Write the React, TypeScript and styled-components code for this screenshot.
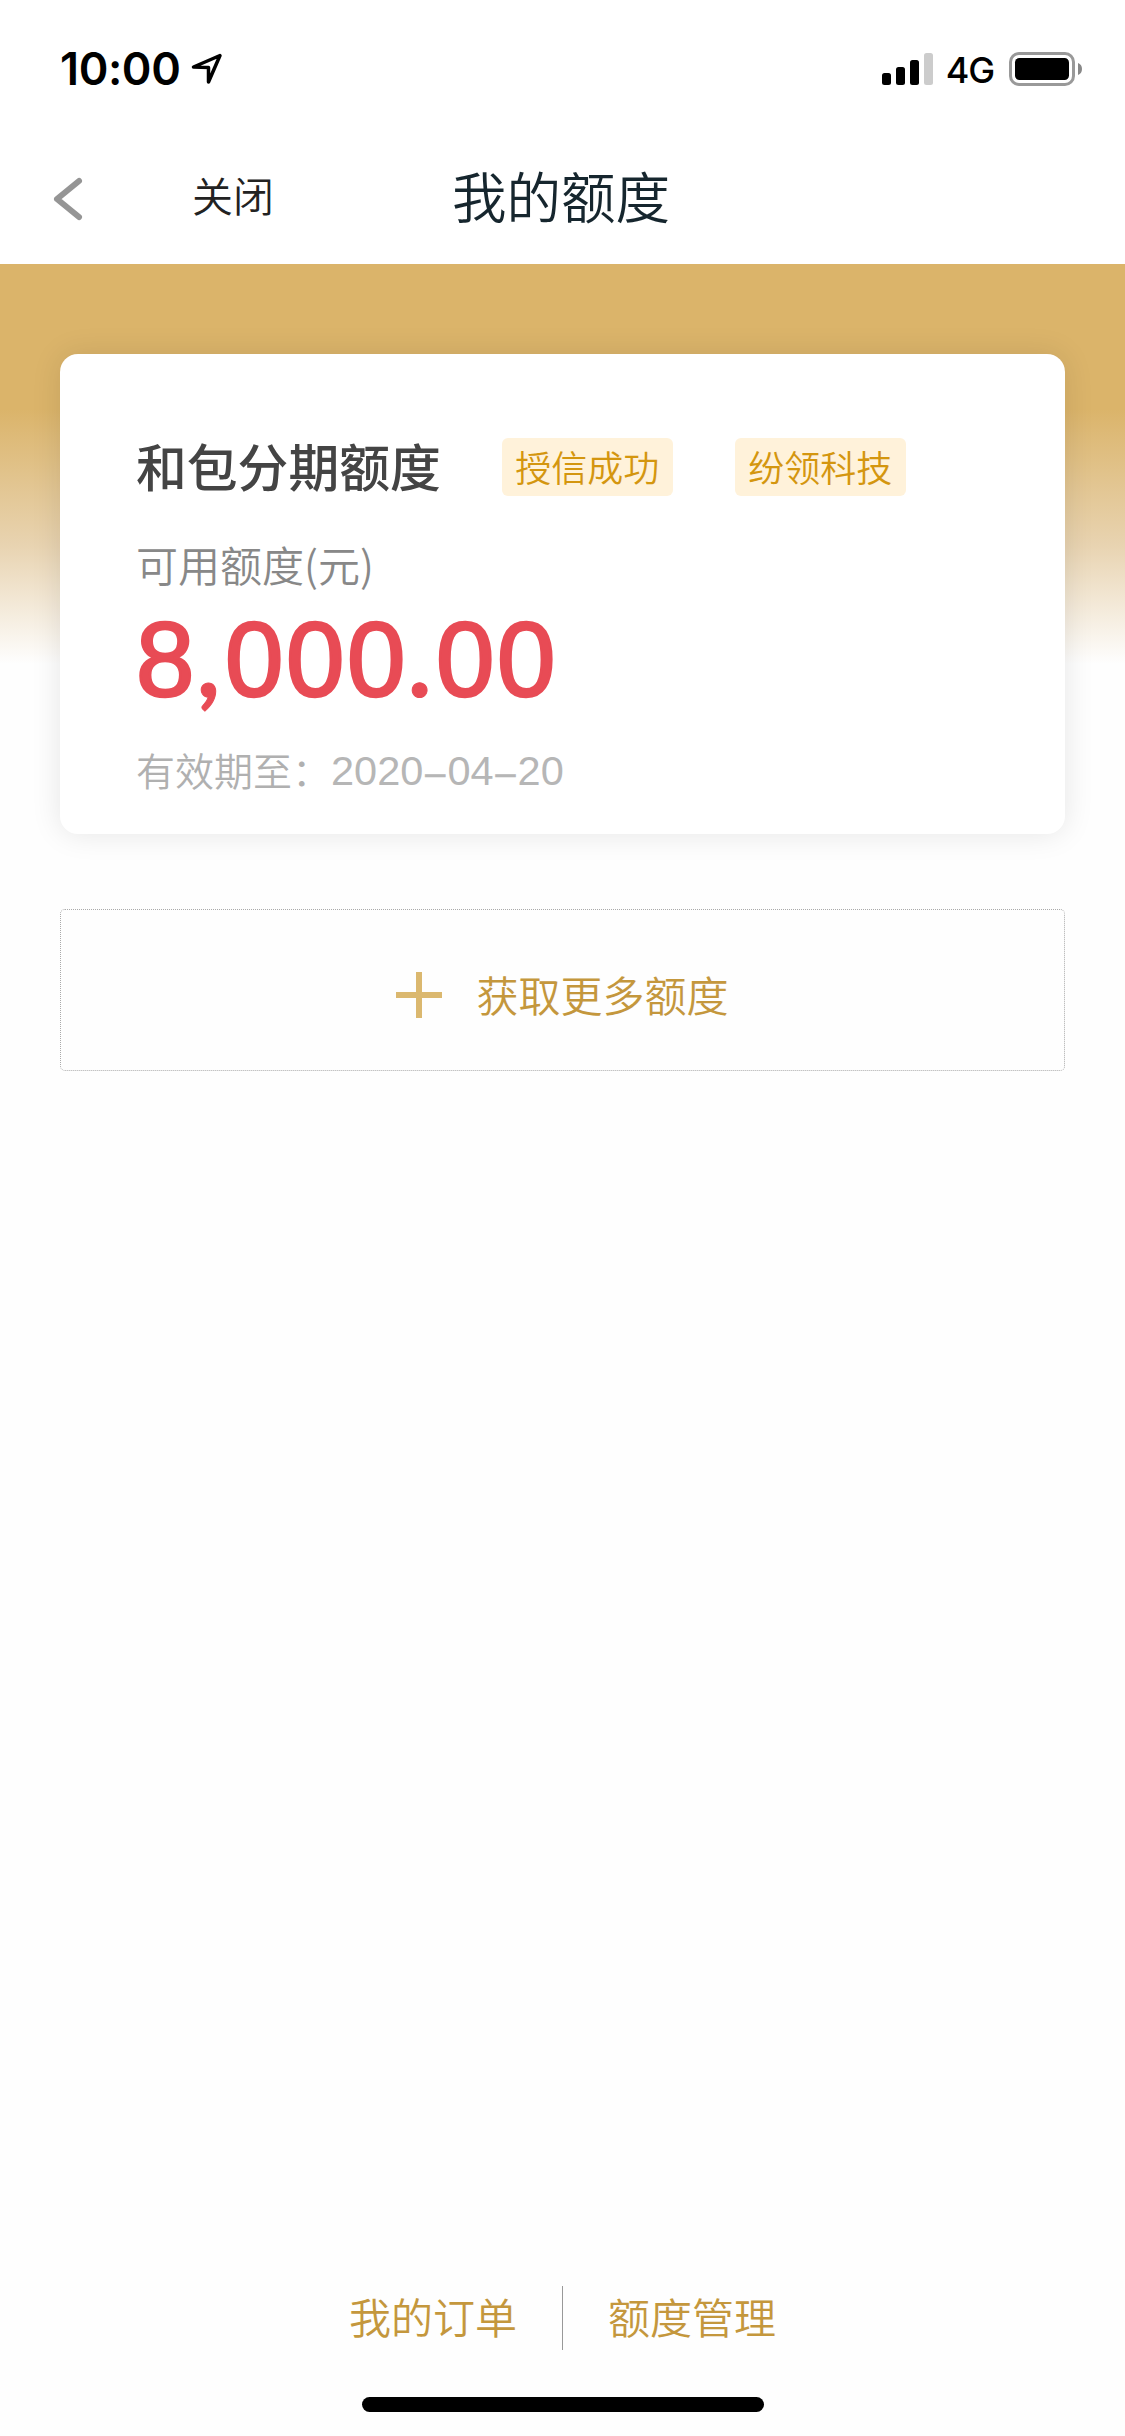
import React from "react";
import styled, { createGlobalStyle } from "styled-components";

const latin = `Inter, "Noto Sans CJK SC", sans-serif`;
const cjk = `"Noto Sans CJK SC", sans-serif`;
const digits = `"Liberation Sans", "Noto Sans CJK SC", sans-serif`;

const GlobalStyle = createGlobalStyle`
  * { box-sizing: border-box; }
  body { margin: 0; background: #fefefe; font-family: ${cjk}; }
`;

const Screen = styled.div`
  display: flex;
  flex-direction: column;
  width: 1125px;
  height: 2436px;
  overflow: hidden;
  background: #fefefe;
`;

const StatusBar = styled.header`
  display: flex;
  justify-content: space-between;
  height: 132px;
  padding: 45px 43px 0 60px;
  background: #fff;
`;

const StatusGroup = styled.div<{ $gap: number }>`
  display: flex;
  align-items: center;
  gap: ${(p) => p.$gap}px;
  height: 48px;
`;

const Clock = styled.span`
  font: 600 45px/48px ${latin};
  letter-spacing: -0.4px;
  color: #000;
`;

const Network = styled.span`
  margin-left: -2px;
  padding-top: 1px;
  font: 500 36px/48px ${latin};
  letter-spacing: -1.2px;
  color: #000;
`;

const NavBar = styled.nav`
  display: grid;
  grid-template-columns: 192px 189px 360px 1fr;
  align-items: center;
  height: 132px;
  background: #fff;
`;

const BackButton = styled.button`
  display: flex;
  padding: 2px 0 0 52px;
  border: 0;
  background: none;
`;

const CloseButton = styled.button`
  padding: 0 0 9px;
  border: 0;
  background: none;
  text-align: left;
  font: 350 41px/60px ${cjk};
  color: #222;
`;

const PageTitle = styled.h1`
  margin: 0;
  padding-bottom: 6px;
  text-align: center;
  font: 350 54.5px/80px ${cjk};
  color: #16262e;
`;

const Hero = styled.main`
  flex: 1;
  display: flex;
  flex-direction: column;
  gap: 75px;
  padding: 90px 60px 0;
  background: linear-gradient(#dbb46a 0, #dbb46a 145px, #e8d3b0 280px, #fefefe 400px) no-repeat;
`;

const QuotaCard = styled.section`
  height: 480px;
  padding: 77px 76px 0;
  border-radius: 18px;
  background: #fff;
  box-shadow: 0 0 30px rgba(0, 0, 0, 0.1);
`;

const CardHeader = styled.div`
  display: flex;
  align-items: center;
  height: 72px;
`;

const CardTitle = styled.h2`
  margin: 0 61px 0 0;
  padding-bottom: 3px;
  font: 500 50.8px/67px ${cjk};
  color: #444;
`;

const Tag = styled.span`
  margin-right: 62px;
  padding: 0 13.5px;
  height: 58px;
  border-radius: 6px;
  background: #fff2da;
  font: 350 36px/56px ${cjk};
  color: #d4960f;
`;

const QuotaLabel = styled.div`
  margin-top: 31px;
  font: 350 42px/60px ${cjk};
  color: #888;
`;

const Amount = styled.div`
  display: flex;
  height: 116px;
  margin: 8px 0 0;
  font: 400 105px/116px ${digits};
  letter-spacing: 2.6px;
  -webkit-text-stroke: 2.6px #e84b55;
  color: #e84b55;
`;

const Point = styled.span`
  width: 28px;
  font: 700 98px/114px Lato, sans-serif;
  letter-spacing: 0;
  -webkit-text-stroke: 1px #e84b55;
`;

const Expiry = styled.div`
  display: flex;
  margin-top: 21px;
  font: 350 39px/60px ${cjk};
  color: #b0b0b0;
`;

const ExpiryDate = styled.span`
  padding-top: 2px;
  font: 400 41.5px/60px ${digits};
  color: #b6b6b6;
`;

const Dash = styled.span`
  margin: 0 2px;
  font-size: 36px;
  -webkit-text-stroke: 0.6px #b6b6b6;
`;

const MoreButton = styled.button`
  display: flex;
  align-items: center;
  justify-content: center;
  gap: 34px;
  height: 162px;
  padding: 10px 0 0;
  border: 1px dotted #aaa;
  border-radius: 5px;
  background: #fefefe;
  font: 350 42px/60px ${cjk};
  color: #c4973d;
`;

const MoreLabel = styled.span`
  padding-bottom: 3px;
`;

const Footer = styled.footer`
  display: grid;
  grid-template-columns: 1fr 1px 1fr;
  column-gap: 45px;
  align-items: center;
  height: 64px;
  margin-bottom: 47px;
`;

const FooterLink = styled.a<{ $align: "left" | "right" }>`
  padding-bottom: 4px;
  text-align: ${(p) => p.$align};
  font: 350 42px/60px ${cjk};
  color: #c4973d;
`;

const Divider = styled.i`
  height: 64px;
  background: #999;
`;

const HomeIndicator = styled.div`
  width: 402px;
  height: 15px;
  margin: 0 auto 24px;
  border-radius: 8px;
  background: #000;
`;

export default function App() {
  return (
    <Screen>
      <GlobalStyle />
      <StatusBar>
        <StatusGroup $gap={11}>
          <Clock>10:00</Clock>
          <svg width="32" height="32" viewBox="0 0 32 32" fill="none" stroke="#000" strokeWidth="3.5" strokeLinejoin="round">
            <path d="M29 2.500 L2.500 14 L17.500 14.500 L17.500 29 Z" />
          </svg>
        </StatusGroup>
        <StatusGroup $gap={15}>
          <svg width="51" height="32" viewBox="0 0 51 32">
            <rect x="0" y="20" width="9" height="12" rx="2.5" />
            <rect x="14" y="14" width="9" height="18" rx="2.5" />
            <rect x="28" y="7" width="9" height="25" rx="2.5" />
            <rect x="42" y="0" width="9" height="32" rx="2.5" fill="#ccc" />
          </svg>
          <Network>4G</Network>
          <svg width="73" height="34" viewBox="0 0 73 34">
            <rect x="1.5" y="1.5" width="63" height="31" rx="8.5" fill="none" stroke="#999" strokeWidth="3" />
            <rect x="6" y="6" width="54" height="22" rx="4.5" />
            <path d="M69 11 Q73 12.5 73 17 Q73 21.500 69 23 Z" fill="#888" />
          </svg>
        </StatusGroup>
      </StatusBar>
      <NavBar>
        <BackButton aria-label="返回">
          <svg width="32" height="44" viewBox="0 0 32 44" fill="none" stroke="#959595" strokeWidth="6" strokeLinecap="round" strokeLinejoin="round">
            <path d="M27 4 L5 22 L27 40" />
          </svg>
        </BackButton>
        <CloseButton>关闭</CloseButton>
        <PageTitle>我的额度</PageTitle>
      </NavBar>
      <Hero>
        <QuotaCard>
          <CardHeader>
            <CardTitle>和包分期额度</CardTitle>
            <Tag>授信成功</Tag>
            <Tag>纷领科技</Tag>
          </CardHeader>
          <QuotaLabel>可用额度(元)</QuotaLabel>
          <Amount>
            8<Point>,</Point>000<Point>.</Point>00
          </Amount>
          <Expiry>
            有效期至：
            <ExpiryDate>
              2020<Dash>–</Dash>04<Dash>–</Dash>20
            </ExpiryDate>
          </Expiry>
        </QuotaCard>
        <MoreButton>
          <svg width="46" height="46" viewBox="0 0 46 46" stroke="#dbb86f" strokeWidth="6">
            <path d="M0 23H46M23 0V46" />
          </svg>
          <MoreLabel>获取更多额度</MoreLabel>
        </MoreButton>
      </Hero>
      <Footer>
        <FooterLink $align="right">我的订单</FooterLink>
        <Divider />
        <FooterLink $align="left">额度管理</FooterLink>
      </Footer>
      <HomeIndicator />
    </Screen>
  );
}
